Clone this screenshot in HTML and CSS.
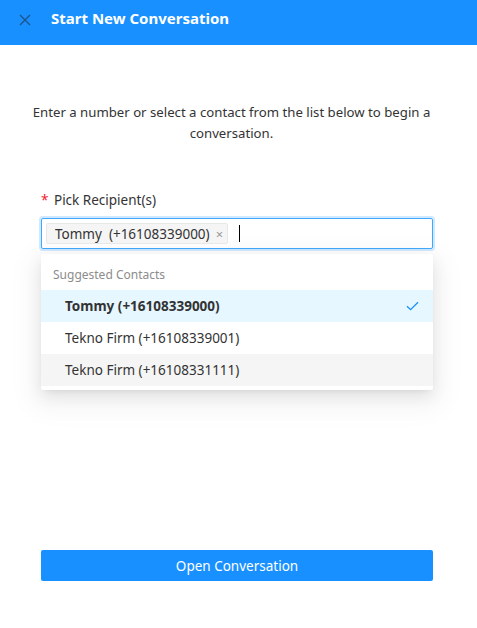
FILE: index.html
```html
<!DOCTYPE html>
<html>
<head>
<meta charset="utf-8">
<link rel="stylesheet" href="styles.css">
</head>
<body>
<div class="page">
  <header class="header">
    <svg class="close" width="12" height="12" viewBox="0 0 12 12"><path d="M1 1L11 11M11 1L1 11" stroke="#20558a" stroke-width="1.4" fill="none"/></svg>
    <span class="title">Start New Conversation</span>
  </header>
  <main class="body">
    <p class="intro">Enter a number or select a contact from the list below to begin a conversation.</p>
    <div class="field">
      <label class="label"><span class="req">*</span> Pick Recipient(s)</label>
      <div class="select">
        <span class="tag">Tommy&nbsp; (+16108339000)<span class="tag-x">×</span></span>
        <span class="cursor"></span>
      </div>
      <div class="dropdown">
        <div class="group">Suggested Contacts</div>
        <div class="opt selected">Tommy (+16108339000)
          <svg class="check" width="13" height="10" viewBox="0 0 13 10"><path d="M1 5.2L4.6 8.6L12 1.2" stroke="#1890ff" stroke-width="1.3" fill="none"/></svg>
        </div>
        <div class="opt">Tekno Firm (+16108339001)</div>
        <div class="opt active">Tekno Firm (+16108331111)</div>
      </div>
    </div>
    <div class="spacer"></div>
    <button class="btn">Open Conversation</button>
  </main>
</div>
</body>
</html>
```
FILE: styles.css
```css
* { box-sizing: border-box; }
html, body { margin: 0; padding: 0; background: #fff; }
body { font-family: "Noto Sans", "Open Sans", sans-serif; font-size: 14px; color: rgba(0,0,0,0.85); }
.page { width: 477px; height: 628px; display: flex; flex-direction: column; }
.header { height: 45px; background: #1890ff; display: flex; align-items: center; padding-left: 19px; }
.close { margin-right: 20px; margin-top: -6px; }
.title { color: #fff; font-weight: 700; font-size: 15px; margin-top: -9px; }
.body { flex: 1; display: flex; flex-direction: column; padding: 0 44px 0 41px; }
.intro { margin: 57px -30px 0 -41px; text-align: center; line-height: 21px; font-size: 13.2px; color: #333; }
.field { margin-top: 46px; position: relative; }
.label { display: block; font-size: 13.5px; color: #333; line-height: 20px; }
.req { color: #f5222d; margin-right: 2px; }
.select { margin-top: 8px; height: 31px; border: 1px solid #40a9ff; border-radius: 2px; box-shadow: 0 0 0 2px rgba(24,144,255,0.2); display: flex; align-items: center; padding-left: 4px; }
.tag { height: 21px; background: #f5f5f5; border: 1px solid #e8e8e8; border-radius: 2px; padding: 0 4px 0 8px; display: flex; align-items: center; font-size: 13.5px; color: #333; }
.tag-x { color: #999; font-size: 13px; margin-left: 6px; }
.cursor { width: 1px; height: 17px; background: #000; margin-left: 11px; }
.dropdown { margin-top: 5px; background: #fff; box-shadow: 0 3px 6px -4px rgba(0,0,0,0.12), 0 6px 16px 0 rgba(0,0,0,0.08), 0 9px 28px 8px rgba(0,0,0,0.05); border-radius: 2px; padding: 4px 0; }
.group { font-size: 12px; color: #8c8c8c; padding: 0 12px; height: 32px; display: flex; align-items: center; }
.opt { height: 32px; display: flex; align-items: center; justify-content: space-between; padding: 0 14px 0 24px; font-size: 13.5px; color: #333; }
.opt.selected { background: #e6f7ff; font-weight: 700; }
.opt.active { background: #f5f5f5; }
.spacer { flex: 1; }
.btn { margin-bottom: 47px; height: 31px; background: #1890ff; border: 0; border-radius: 2px; color: #fff; font-family: inherit; font-size: 13.5px; }
```
